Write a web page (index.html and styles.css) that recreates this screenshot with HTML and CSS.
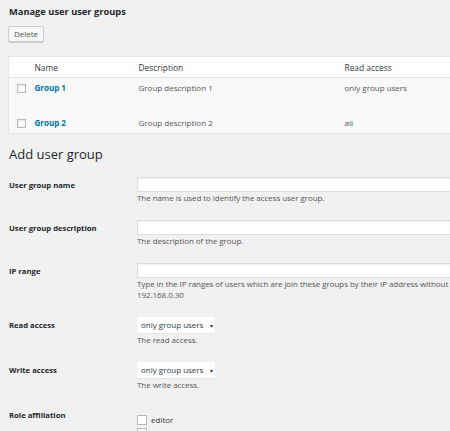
FILE: index.html
```html
<!DOCTYPE html>
<html lang="en">
<head>
    <meta charset="UTF-8">
    <title>User groups</title>
    <link rel="stylesheet" href="styles.css">
</head>
<body>
    <div class="wrap">
        <h2 class="list-title">Manage user user groups</h2>

        <div class="tablenav">
            <button type="button" class="button">Delete</button>
        </div>

        <table class="list-table">
            <thead>
                <tr>
                    <th class="check-col"></th>
                    <th class="name-col">Name</th>
                    <th class="desc-col">Description</th>
                    <th class="read-col">Read access</th>
                </tr>
            </thead>
            <tbody>
                <tr class="first-row">
                    <td class="check-col"><input type="checkbox"></td>
                    <td><a href="#">Group 1</a></td>
                    <td>Group description 1</td>
                    <td>only group users</td>
                </tr>
                <tr>
                    <td class="check-col"><input type="checkbox"></td>
                    <td><a href="#">Group 2</a></td>
                    <td>Group description 2</td>
                    <td>all</td>
                </tr>
            </tbody>
        </table>

        <h2 class="form-title">Add user group</h2>

        <table class="form-table">
            <tr>
                <th>User group name</th>
                <td>
                    <input type="text" class="text-field">
                    <p class="description">The name is used to identify the access user group.</p>
                </td>
            </tr>
            <tr>
                <th>User group description</th>
                <td>
                    <input type="text" class="text-field">
                    <p class="description">The description of the group.</p>
                </td>
            </tr>
            <tr>
                <th>IP range</th>
                <td>
                    <input type="text" class="text-field">
                    <p class="description">Type in the IP ranges of users which are join these groups by their IP address without<br>192.168.0.30</p>
                </td>
            </tr>
            <tr>
                <th>Read access</th>
                <td>
                    <div class="select">only group users <span class="arrow">&#9662;</span></div>
                    <p class="description">The read access.</p>
                </td>
            </tr>
            <tr>
                <th>Write access</th>
                <td>
                    <div class="select">only group users <span class="arrow">&#9662;</span></div>
                    <p class="description">The write access.</p>
                </td>
            </tr>
            <tr>
                <th>Role affiliation</th>
                <td class="roles">
                    <label class="role"><input type="checkbox"> editor</label>
                    <label class="role"><input type="checkbox"></label>
                </td>
            </tr>
        </table>
    </div>
</body>
</html>
```

FILE: styles.css
```css
* {
    margin: 0;
    padding: 0;
    box-sizing: border-box;
}

html, body {
    overflow: hidden;
}

body {
    font-family: 'Open Sans', 'Liberation Sans', sans-serif;
    font-size: 8px;
    color: #444;
    background: #f1f1f1;
}

.wrap {
    padding-left: 8px;
    width: 450px;
}

.list-title {
    font-size: 9.3px;
    font-weight: 700;
    color: #23282d;
    padding: 5px 0 0 1px;
    line-height: 13px;
}

.tablenav {
    padding-top: 8px;
    height: 38px;
}

.button {
    font-family: inherit;
    font-size: 8px;
    color: #555;
    background: #f7f7f7;
    border: 1px solid #ccc;
    border-radius: 2px;
    box-shadow: 0 1px 0 #ccc;
    height: 16px;
    width: 36px;
    line-height: 14px;
}

.list-table {
    border-collapse: collapse;
    background: #fff;
    border: 1px solid #e5e5e5;
    border-right: none;
    width: 442px;
    table-layout: fixed;
}

.list-table th {
    text-align: left;
    font-weight: 400;
    font-size: 8.4px;
    color: #32373c;
    height: 21px;
    padding: 0 4px;
    border-bottom: 1px solid #e1e1e1;
}

.list-table td {
    vertical-align: top;
    padding: 4px 4px 0;
    color: #555;
    background: #f9f9f9;
    height: 21px;
}

.list-table .first-row td {
    height: 35px;
}

.check-col { width: 22px; }
.name-col { width: 104px; }
.desc-col { width: 206px; }

.list-table input[type="checkbox"] {
    appearance: none;
    width: 9px;
    height: 9px;
    margin: 2px 0 0 4px;
    border: 1px solid #b4b9be;
    background: #fff;
    box-shadow: inset 0 1px 2px rgba(0,0,0,0.1);
    display: block;
}

.list-table a {
    color: #0073aa;
    font-weight: 700;
    text-decoration: none;
}

.form-title {
    font-size: 13px;
    font-weight: 400;
    color: #23282d;
    line-height: 18px;
    padding: 11px 0 0 1px;
}

.form-table {
    border-collapse: collapse;
    margin-top: 14px;
    width: 442px;
    table-layout: fixed;
}

.form-table th {
    width: 129px;
    text-align: left;
    vertical-align: top;
    font-weight: 700;
    font-size: 7.7px;
    color: #23282d;
    padding: 3px 0 0 1px;
    line-height: 11px;
}

.form-table td {
    vertical-align: top;
    padding: 0 0 17px;
}

.text-field {
    display: block;
    width: 100%;
    height: 15px;
    border: 1px solid #ddd;
    border-right: none;
    background: #fff;
    box-shadow: inset 0 1px 2px rgba(0,0,0,0.07);
}

.description {
    color: #555;
    line-height: 11px;
    letter-spacing: -0.06px;
    white-space: nowrap;
}

.select {
    display: inline-block;
    width: 78px;
    height: 16px;
    line-height: 16px;
    padding-left: 4px;
    background: #fff;
    color: #32373c;
    box-shadow: 0 1px 1px rgba(0,0,0,0.04);
}

.select + .description {
    margin-top: 1px;
}

.select .arrow {
    font-size: 6px;
    margin-left: 4px;
}

.form-table .roles {
    padding-top: 6px;
}

.role {
    display: flex;
    align-items: center;
    gap: 4px;
    color: #32373c;
    line-height: 13px;
    height: 13px;
}

.role input {
    appearance: none;
    width: 10px;
    height: 10px;
    border: 1px solid #b4b9be;
    background: #fff;
}
```
